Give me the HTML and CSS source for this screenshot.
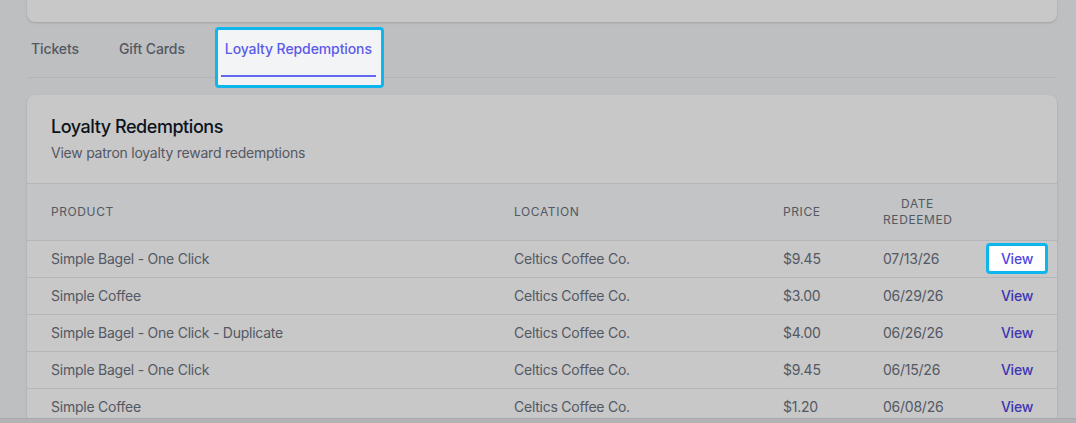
FILE: index.html
```
<!DOCTYPE html>
<html lang="en">
<head>
  <meta charset="UTF-8">
  <title>Patron - Loyalty Redemptions</title>
  <link rel="stylesheet" href="styles.css">
</head>
<body>
  <div class="page">
    <div class="card card-top"></div>

    <nav class="tabs">
      <a class="tab">Tickets</a>
      <a class="tab">Gift Cards</a>
      <a class="tab active spot">Loyalty Repdemptions</a>
    </nav>

    <div class="card">
      <div class="card-head">
        <h3>Loyalty Redemptions</h3>
        <p>View patron loyalty reward redemptions</p>
      </div>
      <table class="redemptions">
        <colgroup>
          <col class="c-product">
          <col class="c-location">
          <col class="c-price">
          <col class="c-date">
          <col>
        </colgroup>
        <thead>
          <tr>
            <th>Product</th>
            <th>Location</th>
            <th>Price</th>
            <th class="center">Date<br>Redeemed</th>
            <th></th>
          </tr>
        </thead>
        <tbody>
          <tr>
            <td>Simple Bagel - One Click</td>
            <td>Celtics Coffee Co.</td>
            <td>$9.45</td>
            <td>07/13/26</td>
            <td class="right"><a class="view spot">View</a></td>
          </tr>
          <tr>
            <td>Simple Coffee</td>
            <td>Celtics Coffee Co.</td>
            <td>$3.00</td>
            <td>06/29/26</td>
            <td class="right"><a class="view">View</a></td>
          </tr>
          <tr>
            <td>Simple Bagel - One Click - Duplicate</td>
            <td>Celtics Coffee Co.</td>
            <td>$4.00</td>
            <td>06/26/26</td>
            <td class="right"><a class="view">View</a></td>
          </tr>
          <tr>
            <td>Simple Bagel - One Click</td>
            <td>Celtics Coffee Co.</td>
            <td>$9.45</td>
            <td>06/15/26</td>
            <td class="right"><a class="view">View</a></td>
          </tr>
          <tr>
            <td>Simple Coffee</td>
            <td>Celtics Coffee Co.</td>
            <td>$1.20</td>
            <td>06/08/26</td>
            <td class="right"><a class="view">View</a></td>
          </tr>
        </tbody>
      </table>
    </div>
  </div>

  <!-- tour dimmer, spotlighted items sit above it -->
  <div class="dimmer"></div>
  <div class="bottom-bar"></div>
</body>
</html>
```

FILE: styles.css
```
body{
  margin: 0;
  background-color: #f3f4f6;
  font-family: Inter, "Noto Sans", sans-serif;
  color: #111827;
  letter-spacing: -0.015em;
  overflow: hidden;
}

.page{
  padding: 0 19px 0 27px;
}

.card{
  background-color: #ffffff;
  border-radius: 8px;
  box-shadow: 0 1px 3px rgba(0,0,0,0.1), 0 1px 2px rgba(0,0,0,0.06);
  overflow: hidden;
}

.card-top{
  height: 22px;
  border-radius: 0 0 8px 8px;
}

/* tabs */
.tabs{
  display: flex;
  gap: 32px;
  margin-top: 10px;
  margin-bottom: 17px;
  border-bottom: 1px solid #e5e7eb;
}

.tab{
  position: relative;
  padding: 7px 4px 18px 4px;
  font-size: 14px;
  line-height: 20px;
  font-weight: 500;
  letter-spacing: -0.1px;
  color: #6b7280;
}

.tab.active{
  color: #5b5bea;
}

.tab.active::after{
  content: "";
  position: absolute;
  left: 0;
  right: 0;
  bottom: 0;
  height: 2px;
  background-color: #6366f1;
}

/* card header */
.card-head{
  padding: 20px 24px;
  border-bottom: 1px solid #e5e7eb;
}

.card-head h3{
  margin: 0;
  font-size: 18px;
  line-height: 24px;
  font-weight: 500;
  letter-spacing: -0.45px;
  color: #111827;
}

.card-head p{
  margin: 4px 0 0 0;
  font-size: 14px;
  line-height: 20px;
  color: #6b7280;
}

/* table */
.redemptions{
  width: 100%;
  border-collapse: collapse;
  table-layout: fixed;
}

.c-product{ width: 463px; }
.c-location{ width: 269px; }
.c-price{ width: 100px; }
.c-date{ width: 117px; }

.redemptions th{
  background-color: #f9fafb;
  padding: 12px 24px;
  font-size: 12px;
  line-height: 16px;
  font-weight: 400;
  letter-spacing: 0.05em;
  text-transform: uppercase;
  text-align: left;
  color: #6b7280;
  vertical-align: middle;
}

.redemptions th.center{
  text-align: center;
}

.redemptions td{
  padding: 8px 24px;
  border-top: 1px solid #e5e7eb;
  font-size: 14px;
  line-height: 20px;
  color: #6b7280;
  white-space: nowrap;
}

.redemptions td.right{
  text-align: right;
}

.view{
  color: #4f46e5;
  font-weight: 500;
}

/* tour dimmer + spotlight */
.dimmer{
  position: fixed;
  inset: 0;
  background-color: rgba(0,0,0,0.215);
  z-index: 10;
}

.spot{
  position: relative;
  z-index: 20;
}

.spot::before{
  content: "";
  position: absolute;
  border: 3px solid #0db6ec;
  border-radius: 4px;
  z-index: -1;
}

.tab.spot::before{
  top: -5px;
  bottom: -11px;
  left: -6px;
  right: -8px;
  background-color: #f3f4f6;
}

.view.spot::before{
  top: -7px;
  bottom: -7px;
  left: -15px;
  right: -15px;
  background-color: #ffffff;
}

.bottom-bar{
  position: fixed;
  left: 0;
  right: 0;
  bottom: 0;
  height: 4px;
  background-color: #b3b3b5;
  border-top: 1px solid #a9a9ab;
  z-index: 30;
}
```
